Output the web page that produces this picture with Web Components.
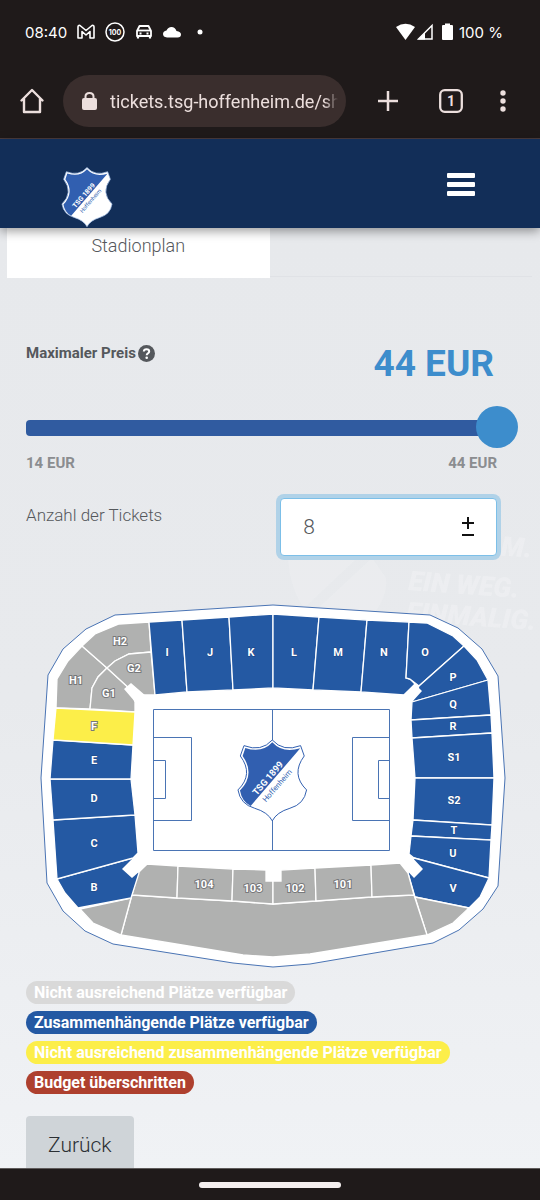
<!DOCTYPE html>
<html lang="de">
<head>
<meta charset="utf-8">
<meta name="viewport" content="width=device-width, initial-scale=1">
<title>TSG Hoffenheim Ticketshop</title>
<style>
    :root{
        --color-chrome: #1f1a1a;
        --color-chrome-text: #ecdfdd;
        --color-navy: #122e58;
        --color-blue: #2459a3;
        --color-accent: #3d8dcc;
        --color-yellow: #fcee49;
        --color-grey: #b0b1b0;
        --color-text: #55585c;
    }

    body{
        margin: 0;
        height: 100vh;
        font-family: Roboto, "Liberation Sans", sans-serif;
        color: var(--color-text);
    }
</style>
</head>
<body>
<ticket-app></ticket-app>

<script>
// Crest drawing, shared by the header and the pitch
const crest = (outline) => `
    <path d="M157 45Q190 82 242 62L253 93Q212 148 260 195Q253 238 210 250Q170 262 157 288Q144 262 104 250Q61 238 54 195Q102 148 61 93L72 62Q124 82 157 45Z" fill="#fff" stroke="${outline}" stroke-width="3"/>
    <path d="M157 52Q188 86 241 70L92 243Q66 231 60 197Q107 148 68 93L76 69Q126 86 157 52Z" fill="#315fb0"/>
    <text transform="translate(110 213) rotate(-49)" font-size="28" font-weight="700" fill="#fff">TSG 1899</text>
    <text transform="translate(138 233) rotate(-49)" font-size="23" fill="#315fb0">Hoffenheim</text>
`;

class StatusBar extends HTMLElement{

    constructor(){
        super();

        this.attachShadow({mode: 'open'});
        this.render();
    }

    render(){
        this.shadowRoot.innerHTML = `
            <style>
                :host{
                    display: flex;
                    justify-content: space-between;
                    align-items: center;
                    height: 64px;
                    padding: 0 37px 0 25px;
                    background-color: var(--color-chrome);
                    color: #fff;
                    font-family: Inter, Roboto, sans-serif;
                    font-size: 15px;
                    font-weight: 400;
                }

                .left, .right{
                    display: flex;
                    align-items: center;
                }

                .left{
                    gap: 10px;
                }

                .right{
                    gap: 1px;
                }
            </style>

            <div class="left">
                <span>08:40</span>
                <svg width="18" height="20" viewBox="0 0 18 20" fill="none" stroke="#fff" stroke-width="1.6" stroke-linejoin="round"><path d="M1 16V5Q1 3 3 3.5L9 8.5L15 3.5Q17 3 17 5V16H13V9.5L9 13L5 9.5V16Z"/></svg>
                <svg width="20" height="20" viewBox="0 0 20 20"><circle cx="10" cy="10" r="9" fill="none" stroke="#fff" stroke-width="1.5"/><text x="10" y="12.6" text-anchor="middle" font-size="7" font-weight="700" fill="#fff">100</text></svg>
                <svg width="18" height="20" viewBox="0 0 18 20" fill="none" stroke="#fff" stroke-width="1.8"><path d="M4.5 4H13.5L16 9V14H2V9Z" stroke-linejoin="round"/><path d="M2 8.5H16"/><path d="M3 14V16.5M15 14V16.5" stroke-width="2.2"/><path d="M4.5 11.5H6.5M11.5 11.5H13.5"/></svg>
                <svg width="18" height="20" viewBox="0 0 18 20" fill="#fff"><path d="M4 15.5Q0 15 0 12Q0 9 3.5 8.5Q5 5 8.5 5Q12 5 13.5 9Q18 9.5 18 12.5Q18 15.5 14.5 15.5Z"/></svg>
                <svg width="18" height="20" viewBox="0 0 18 20" fill="#fff"><circle cx="9" cy="10" r="2.5"/></svg>
            </div>
            <div class="right">
                <svg width="21" height="18" viewBox="0 0 21 18" fill="#fff"><path d="M1 4Q10.5 -2.5 20 4L10.5 17Z"/></svg>
                <svg width="17" height="18" viewBox="0 0 17 18"><path d="M1.5 16L15 2.5V16Z" fill="none" stroke="#fff" stroke-width="1.5"/><path d="M1 16.5L8 9.5V16.5Z" fill="#fff"/></svg>
                <svg width="23" height="18" viewBox="0 0 23 18" fill="#fff"><path d="M7 3Q7 2 8 2H10V0.5H15V2H17Q18 2 18 3V16Q18 17 17 17H8Q7 17 7 16Z"/></svg>
                <span>100 %</span>
            </div>
        `;
    }
}

class BrowserBar extends HTMLElement{

    constructor(){
        super();

        this.attachShadow({mode: 'open'});
        this.render();
    }

    render(){
        this.shadowRoot.innerHTML = `
            <style>
                :host{
                    display: grid;
                    grid-template-columns: 63px 1fr 84px 42px 62px;
                    align-items: center;
                    height: 74px;
                    padding-right: 8px;
                    background-color: var(--color-chrome);
                    border-bottom: 1px solid #4b3d3f;
                }

                button{
                    display: grid;
                    place-items: center;
                    height: 48px;
                    padding: 0;
                    border: 0;
                    background: none;
                }

                .address{
                    display: flex;
                    align-items: center;
                    gap: 12px;
                    height: 52px;
                    padding: 0 8px 0 18px;
                    border-radius: 26px;
                    background-color: #3a2e2d;
                }

                input{
                    flex: 1;
                    min-width: 0;
                    padding: 0;
                    border: 0;
                    background: none;
                    color: var(--color-chrome-text);
                    font: 18px Roboto, sans-serif;
                    -webkit-mask-image: linear-gradient(to right, #000 calc(100% - 14px), transparent);
                    mask-image: linear-gradient(to right, #000 calc(100% - 14px), transparent);
                }
            </style>

            <button type="button" aria-label="Startseite">
                <svg width="26" height="26" viewBox="0 0 26 26" fill="none" stroke="#ecdfdd" stroke-width="2.4" stroke-linejoin="round" stroke-linecap="round"><path d="M2.500 12.500L13 2L23.500 12.500M5 10.500V24H21V10.500"/></svg>
            </button>
            <label class="address">
                <svg width="17" height="20" viewBox="0 0 17 20"><rect x="1" y="7" width="15" height="12" rx="2" fill="#ecdfdd"/><path d="M4.5 8V5.5Q4.5 2 8.5 2Q12.5 2 12.5 5.5V8" fill="none" stroke="#ecdfdd" stroke-width="2"/></svg>
                <input type="text" value="tickets.tsg-hoffenheim.de/sh" aria-label="Adresse">
            </label>
            <button type="button" aria-label="Neuer Tab">
                <svg width="22" height="22" viewBox="0 0 22 22" stroke="#ecdfdd" stroke-width="2.5"><path d="M11 1V21M1 11H21"/></svg>
            </button>
            <button type="button" aria-label="Tabs">
                <svg width="24" height="24" viewBox="0 0 24 24"><rect x="1.2" y="1.2" width="21.6" height="21.6" rx="4.5" fill="none" stroke="#ecdfdd" stroke-width="2.3"/><text x="12" y="17" text-anchor="middle" font-family="Roboto" font-size="14" font-weight="700" fill="#ecdfdd">1</text></svg>
            </button>
            <button type="button" aria-label="Mehr">
                <svg width="8" height="24" viewBox="0 0 8 24" fill="#ecdfdd"><circle cx="4" cy="4" r="2.7"/><circle cx="4" cy="12" r="2.7"/><circle cx="4" cy="20" r="2.7"/></svg>
            </button>
        `;
    }
}

class ShopHeader extends HTMLElement{

    constructor(){
        super();

        this.attachShadow({mode: 'open'});
        this.render();
    }

    render(){
        this.shadowRoot.innerHTML = `
            <style>
                :host{
                    display: flex;
                    justify-content: space-between;
                    align-items: flex-end;
                    height: 89px;
                    padding: 0 65px 0 61px;
                    box-sizing: border-box;
                    position: relative;
                    z-index: 1;
                    background-color: var(--color-navy);
                    box-shadow: 0 3px 10px rgba(0, 0, 0, 0.4);
                }

                a svg{
                    display: block;
                }

                button{
                    display: grid;
                    gap: 4px;
                    width: 28px;
                    margin-bottom: 32px;
                    padding: 0;
                    border: 0;
                    background: none;
                }

                i{
                    height: 5px;
                    border-radius: 1px;
                    background-color: #fff;
                }
            </style>

            <a href="#" aria-label="TSG Hoffenheim">
                <svg width="52" height="62" viewBox="50 40 214 252">${crest('#a9c4ea')}</svg>
            </a>
            <button type="button" aria-label="Menü"><i></i><i></i><i></i></button>
        `;
    }
}

class ShopTabs extends HTMLElement{

    constructor(){
        super();

        this.attachShadow({mode: 'open'});
        this.render();
    }

    render(){
        this.shadowRoot.innerHTML = `
            <style>
                :host{
                    display: grid;
                    grid-template-columns: 1fr 1fr;
                    height: 50px;
                    padding: 0 8px 0 7px;
                }

                button{
                    border: 0;
                    padding: 0 0 14px;
                    background-color: #fff;
                    color: var(--color-text);
                    font: 300 18px/22px Roboto, sans-serif;
                }

                .rest{
                    border-bottom: 1px solid #e0e2e6;
                    margin-bottom: 1px;
                }
            </style>

            <button type="button"><slot></slot></button>
            <div class="rest"></div>
        `;
    }
}

class PriceSlider extends HTMLElement{

    constructor(){
        super();

        this.attachShadow({mode: 'open'});
        this.render();

        this.range = this.shadowRoot.querySelector('input');
        this.output = this.shadowRoot.querySelector('output');
    }

    connectedCallback(){
        this.range.addEventListener('input', () => {
            this.output.textContent = `${this.range.value} EUR`;
        });
    }

    render(){
        const min = this.getAttribute('min') || 14;
        const max = this.getAttribute('max') || 44;

        this.shadowRoot.innerHTML = `
            <style>
                :host{
                    display: block;
                    font-size: 15px;
                    font-weight: 700;
                    line-height: 22px;
                }

                .top, .limits{
                    display: flex;
                    justify-content: space-between;
                    align-items: flex-start;
                    padding-right: 21px;
                }

                label{
                    display: flex;
                    align-items: center;
                    gap: 2px;
                }

                output{
                    padding-right: 3px;
                    color: var(--color-accent);
                    font-size: 37px;
                    line-height: 44px;
                }

                input{
                    display: block;
                    width: 100%;
                    height: 42px;
                    margin: 21px 0 3px;
                    appearance: none;
                    background: none;
                }

                input::-webkit-slider-runnable-track{
                    height: 16px;
                    margin-right: 21px;
                    border-radius: 4px;
                    background-color: #305ba0;
                }

                input::-webkit-slider-thumb{
                    appearance: none;
                    width: 42px;
                    height: 42px;
                    margin-top: -14px;
                    border-radius: 50%;
                    background-color: var(--color-accent);
                    transform: translateX(21px);
                }

                .limits{
                    color: #8b8d90;
                }
            </style>

            <div class="top">
                <label for="price"><slot></slot>
                    <svg width="17" height="17" viewBox="0 0 17 17"><circle cx="8.5" cy="8.5" r="8.5" fill="#55585c"/><path d="M5.8 6.5Q6 4.3 8.5 4.3Q11.2 4.3 11.2 6.5Q11.2 7.6 9.9 8.3Q8.7 9 8.7 10.2" fill="none" stroke="#fff" stroke-width="2"/><circle cx="8.7" cy="12.7" r="1.3" fill="#fff"/></svg>
                </label>
                <output for="price">${max} EUR</output>
            </div>
            <input type="range" id="price" min="${min}" max="${max}" value="${max}">
            <div class="limits"><span>${min} EUR</span><span>${max} EUR</span></div>
        `;
    }
}

class TicketCount extends HTMLElement{

    constructor(){
        super();

        this.attachShadow({mode: 'open'});
        this.render();

        this.input = this.shadowRoot.querySelector('input');
    }

    connectedCallback(){
        this.shadowRoot.querySelector('.plus').addEventListener('click', () => this.input.stepUp());
        this.shadowRoot.querySelector('.minus').addEventListener('click', () => this.input.stepDown());
    }

    render(){
        this.shadowRoot.innerHTML = `
            <style>
                :host{
                    display: flex;
                    justify-content: space-between;
                    align-items: flex-start;
                    padding-right: 21px;
                }

                label{
                    font-size: 17px;
                    font-weight: 300;
                    line-height: 34px;
                }

                .box{
                    display: flex;
                    align-items: center;
                    flex: 0 0 46%;
                    min-width: 0;
                    height: 58px;
                    padding: 0 22px;
                    box-sizing: border-box;
                    border: 1px solid #7cbfe8;
                    border-radius: 4px;
                    background-color: #fff;
                    box-shadow: 0 0 0 4px #b0d2e8;
                }

                input{
                    flex: 1;
                    width: 0;
                    min-width: 0;
                    padding: 0;
                    border: 0;
                    outline: 0;
                    background: none;
                    color: var(--color-text);
                    font: 300 21px Roboto, sans-serif;
                    appearance: textfield;
                }

                input::-webkit-inner-spin-button{
                    appearance: none;
                }

                .steps{
                    display: grid;
                }

                button{
                    display: block;
                    padding: 0;
                    border: 0;
                    background: none;
                }

                svg{
                    display: block;
                }
            </style>

            <label for="count"><slot></slot></label>
            <div class="box">
                <input type="number" id="count" value="8" min="1">
                <div class="steps">
                    <button type="button" class="plus" aria-label="Mehr Tickets"><svg width="12" height="14" viewBox="0 0 12 14"><path d="M6 1V13M0 7H12" stroke="#111" stroke-width="2"/></svg></button>
                    <button type="button" class="minus" aria-label="Weniger Tickets"><svg width="12" height="8" viewBox="0 0 12 8"><path d="M0 5H12" stroke="#111" stroke-width="2"/></svg></button>
                </div>
            </div>
        `;
    }
}

// [name, state, label x, label y, corners]
const BLOCKS = [
    ['H1', 'none', 76, 680, '82,646 107,668 98,677 92,688 90,709 56,708 57,679 68,661'],
    ['H2', 'none', 120, 641, '82,646 95,634 119,624 149,622 151,652 129,654 115,661 107,668'],
    ['G1', 'none', 109, 693, '107,668 131,690 135,702 135,712 90,709 92,688 98,677'],
    ['G2', 'none', 134, 668, '107,668 115,661 129,654 151,652 155,695 143,695 131,690'],
    ['I', 'free', 167, 652, '149,622 182,620 187,692 155,695'],
    ['J', 'free', 210, 652, '182,620 229,617 233,690 187,692'],
    ['K', 'free', 251, 652, '229,617 273,614 273,688 233,690'],
    ['L', 'free', 294, 652, '273,614 319,617 313,690 273,688'],
    ['M', 'free', 338, 652, '319,617 367,620 361,692 313,690'],
    ['N', 'free', 384, 652, '367,620 409,622 406,678 410,679 415,684 404,695 361,692'],
    ['O', 'free', 425, 652, '409,622 427,623 453,636 464,646 419,686 410,679 406,678'],
    ['P', 'free', 453, 677, '464,646 477,660 488,680 412,702 419,686'],
    ['Q', 'free', 453, 704, '412,702 488,680 491,715 411,720'],
    ['R', 'free', 453, 726, '411,720 491,715 492,733 412,738'],
    ['S1', 'free', 454, 757, '412,738 492,733 494,778 415,778'],
    ['S2', 'free', 454, 800, '415,778 494,778 492,825 413,820'],
    ['T', 'free', 454, 830, '413,820 492,825 491,840 411,836'],
    ['U', 'free', 453, 853, '411,836 491,840 489,878 414,858 409,854'],
    ['V', 'free', 453, 888, '414,858 489,878 480,897 469,908 415,897 408,873'],
    ['', 'none', 0, 0, '415,897 469,908 453,923 427,935'],
    ['', 'none', 0, 0, '132,895 177,898 232,901 273,904 316,901 372,897 414,895 427,935 310,954 273,957 243,955 121,935'],
    ['', 'none', 0, 0, '131,898 121,935 93,923 80,909'],
    ['', 'none', 0, 0, '147,864 178,866 177,898 132,895 138,873'],
    ['104', 'none', 204, 884, '178,866 233,869 232,901 177,898'],
    ['103', 'none', 253, 888, '233,869 266,870 266,881 273,881 273,904 232,901'],
    ['102', 'none', 295, 888, '273,881 281,881 281,870 315,868 316,901 273,904'],
    ['101', 'none', 343, 884, '315,868 371,865 372,897 316,901'],
    ['', 'none', 0, 0, '371,865 400,863 408,873 414,895 372,897'],
    ['B', 'free', 94, 887, '57,879 133,858 139,873 131,898 78,908 65,893'],
    ['C', 'free', 94, 843, '53,820 135,815 138,853 133,858 57,879'],
    ['D', 'free', 94, 798, '50,779 131,779 135,815 53,820'],
    ['E', 'free', 94, 760, '53,740 133,745 131,779 50,779'],
    ['F', 'split', 94, 726, '56,708 135,712 133,745 53,740'],
];

class StadiumPlan extends HTMLElement{

    constructor(){
        super();

        this.attachShadow({mode: 'open'});
        this.render();
    }

    render(){
        const shapes = BLOCKS.map(([name, state, x, y, points]) => `<polygon class="${state}" points="${points}"/>`).join('');
        const labels = BLOCKS.filter(([name]) => name).map(([name, state, x, y]) => `<text class="${state}" x="${x}" y="${y + 4}">${name}</text>`).join('');

        this.shadowRoot.innerHTML = `
            <style>
                :host{
                    display: block;
                }

                svg{
                    display: block;
                    width: 100%;
                }

                .blocks{
                    stroke: #fff;
                    stroke-width: 1.3;
                }

                polygon.none{
                    fill: var(--color-grey);
                }

                polygon.free{
                    fill: var(--color-blue);
                }

                polygon.split{
                    fill: var(--color-yellow);
                }

                .labels{
                    font-size: 11px;
                    font-weight: 700;
                    text-anchor: middle;
                    fill: #fff;
                    stroke: #1d4684;
                    stroke-width: 1;
                    paint-order: stroke;
                }

                .labels .none, .labels .split{
                    stroke: #77787a;
                    stroke-width: 2;
                }

                .pitch{
                    fill: none;
                    stroke: #4a74b4;
                }
            </style>

            <svg viewBox="26 600 492 370" role="img" aria-label="Stadionplan">
                <polygon points="115,615 273,605 430,615 458,628 482,649 498,676 505,778 498,886 483,909 459,930 433,943 310,964 273,967 233,963 113,944 85,931 63,911 47,883 41,778 48,675 63,649 86,629" fill="#fff" stroke="#4a74b4"/>
                <g class="blocks">${shapes}</g>

                <!-- stairways at the corners -->
                <path d="M131 683L124 689L136 703L146 696ZM415 684L422 691L412 702L402 696ZM122 869L132 878L148 864L138 853ZM423 869L414 878L400 863L409 854Z" fill="#fff"/>

                <path class="pitch" d="M153.5 709.5H389.5V850.5H153.5ZM153.5 737.5H191.5V820.5H153.5M153.5 760.5H165.5V798.5H153.5M389.5 737.5H352.5V820.5H389.5M389.5 760.5H378.5V798.5H389.5M272.5 709.5V850.5"/>
                <g transform="translate(220 725) scale(0.333)">${crest('#315fb0')}</g>
                <g class="labels">${labels}</g>
            </svg>
        `;
    }
}

class LegendBadge extends HTMLElement{

    constructor(){
        super();

        this.attachShadow({mode: 'open'});
        this.render();
    }

    render(){
        this.shadowRoot.innerHTML = `
            <style>
                :host{
                    display: block;
                    padding: 0 8px;
                    border-radius: 12px;
                    background-color: #d9d9d9;
                    color: #fff;
                    font-size: 16px;
                    font-weight: 700;
                    line-height: 23px;
                }

                :host([type="free"]){
                    background-color: var(--color-blue);
                }

                :host([type="split"]){
                    background-color: var(--color-yellow);
                }

                :host([type="budget"]){
                    background-color: #ae402e;
                }
            </style>

            <slot></slot>
        `;
    }
}

class GestureBar extends HTMLElement{

    constructor(){
        super();

        this.attachShadow({mode: 'open'});
        this.render();
    }

    render(){
        this.shadowRoot.innerHTML = `
            <style>
                :host{
                    display: grid;
                    place-items: center;
                    height: 31px;
                    border-top: 1px solid #5f5b5b;
                    background-color: var(--color-chrome);
                }

                div{
                    width: 142px;
                    height: 6px;
                    border-radius: 3px;
                    background-color: #f4eeee;
                }
            </style>

            <div></div>
        `;
    }
}

class TicketApp extends HTMLElement{

    constructor(){
        super();

        this.attachShadow({mode: 'open'});
        this.render();
    }

    render(){
        this.shadowRoot.innerHTML = `
            <style>
                :host{
                    display: flex;
                    flex-direction: column;
                    height: 100%;
                }

                status-bar, browser-bar, shop-header, gesture-bar{
                    flex: none;
                }

                main{
                    flex: 1;
                    min-height: 0;
                    overflow: hidden;
                    position: relative;
                    background: linear-gradient(#e7e9ec, #e8eaed 50%, #f0f2f5);
                }

                /* washed-out stadium banner behind the form */
                .banner{
                    position: absolute;
                    top: 300px;
                    right: 0;
                    opacity: 0.22;
                }

                .content{
                    position: relative;
                    display: flex;
                    flex-direction: column;
                    padding: 64px 22px 0 26px;
                }

                ticket-count{
                    margin: 24px 0 44px;
                }

                .legend{
                    display: flex;
                    flex-direction: column;
                    align-items: flex-start;
                    gap: 7px;
                    margin: 11px 0 22px;
                }

                .back{
                    align-self: flex-start;
                    height: 58px;
                    padding: 0 22px;
                    border: 0;
                    border-radius: 4px;
                    background-color: #cfd4d8;
                    color: #2b2f33;
                    font: 300 21px Roboto, sans-serif;
                }
            </style>

            <status-bar></status-bar>
            <browser-bar></browser-bar>
            <shop-header></shop-header>
            <main>
                <svg class="banner" width="260" height="120" viewBox="0 0 260 120" aria-hidden="true">
                    <path d="M8 30Q10 60 24 80L75 32M32 86Q60 98 90 90Q108 70 106 50L92 30Z" fill="#fff" opacity="0.6"/>
                    <g fill="#fff" font-size="27" font-weight="900" font-style="italic" transform="rotate(4)">
                        <text x="222" y="12">M.</text>
                        <text x="132" y="53">EIN WEG.</text>
                        <text x="132" y="84">EINMALIG.</text>
                    </g>
                </svg>
                <shop-tabs>Stadionplan</shop-tabs>
                <div class="content">
                    <price-slider>Maximaler Preis</price-slider>
                    <ticket-count>Anzahl der Tickets</ticket-count>
                    <stadium-plan></stadium-plan>
                    <div class="legend">
                        <legend-badge>Nicht ausreichend Plätze verfügbar</legend-badge>
                        <legend-badge type="free">Zusammenhängende Plätze verfügbar</legend-badge>
                        <legend-badge type="split">Nicht ausreichend zusammenhängende Plätze verfügbar</legend-badge>
                        <legend-badge type="budget">Budget überschritten</legend-badge>
                    </div>
                    <button type="button" class="back">Zurück</button>
                </div>
            </main>
            <gesture-bar></gesture-bar>
        `;
    }
}

customElements.define('status-bar', StatusBar);
customElements.define('browser-bar', BrowserBar);
customElements.define('shop-header', ShopHeader);
customElements.define('shop-tabs', ShopTabs);
customElements.define('price-slider', PriceSlider);
customElements.define('ticket-count', TicketCount);
customElements.define('stadium-plan', StadiumPlan);
customElements.define('legend-badge', LegendBadge);
customElements.define('gesture-bar', GestureBar);
customElements.define('ticket-app', TicketApp);
</script>
</body>
</html>
